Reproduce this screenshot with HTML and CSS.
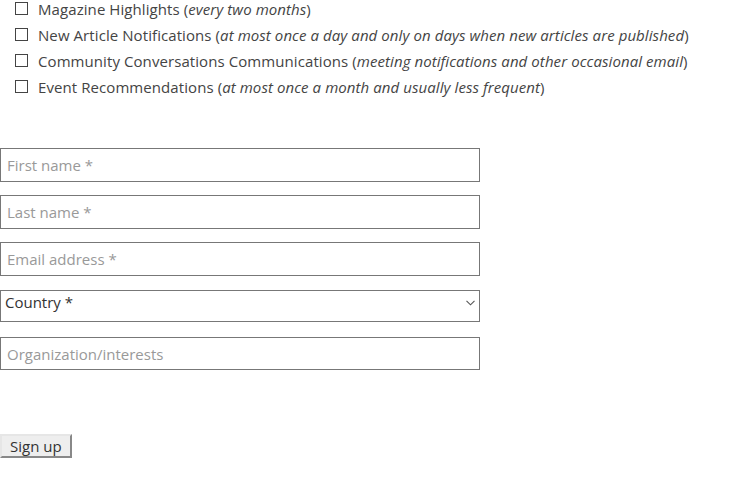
FILE: index.html
```html
<!DOCTYPE html>
<html>
<head>
<meta charset="utf-8">
<link rel="stylesheet" href="styles.css">
</head>
<body>
<form class="signup">
  <ul class="lists">
    <li class="opt"><input type="checkbox" class="cb"><span>Magazine Highlights (<em>every two months</em>)</span></li>
    <li class="opt"><input type="checkbox" class="cb"><span>New Article Notifications (<em>at most once a day and only on days when new articles are published</em>)</span></li>
    <li class="opt"><input type="checkbox" class="cb"><span>Community Conversations Communications (<em>meeting notifications and other occasional email</em>)</span></li>
    <li class="opt"><input type="checkbox" class="cb"><span>Event Recommendations (<em>at most once a month and usually less frequent</em>)</span></li>
  </ul>
  <div class="fields">
    <input class="field" type="text" placeholder="First name *">
    <input class="field" type="text" placeholder="Last name *">
    <input class="field" type="email" placeholder="Email address *">
    <div class="select-wrap">
      <select class="select"><option>Country *</option></select>
      <svg class="chev" width="9" height="6" viewBox="0 0 9 6"><path d="M0.5 0.8 L4.5 4.8 L8.5 0.8" fill="none" stroke="#555" stroke-width="1.1"/></svg>
    </div>
    <input class="field org" type="text" placeholder="Organization/interests">
  </div>
  <button class="submit" type="button">Sign up</button>
</form>
</body>
</html>
```

FILE: styles.css
```css
html, body {
  margin: 0;
  padding: 0;
  background: #fff;
}
body {
  font-family: "Open Sans", "Liberation Sans", sans-serif;
  font-size: 15px;
  color: #444;
}
.signup {
  display: flex;
  flex-direction: column;
  align-items: flex-start;
}
.lists {
  list-style: none;
  margin: 0;
  padding: 0 0 0 15px;
  letter-spacing: 0.08px;
}
.opt {
  display: flex;
  align-items: center;
  height: 26px;
  line-height: 20px;
}
.opt:first-child {
  margin-top: -4px;
}
.cb {
  appearance: none;
  -webkit-appearance: none;
  box-sizing: border-box;
  width: 13px;
  height: 13px;
  margin: 0 10px 0 0;
  border: 1px solid #444;
  background: #fff;
  flex: none;
  position: relative;
  top: -1px;
}
.opt em {
  font-style: italic;
}
.fields {
  display: flex;
  flex-direction: column;
  gap: 13px;
  margin-top: 48px;
}
.field, .select {
  box-sizing: border-box;
  width: 480px;
  height: 34px;
  margin: 0;
  border: 1px solid #777;
  background: #fff;
  font-family: "Open Sans", "Liberation Sans", sans-serif;
  font-size: 15px;
  color: #333;
  border-radius: 0;
  outline: none;
}
.field {
  padding: 0 6px;
}
.field::placeholder {
  color: #999;
}
.select-wrap {
  position: relative;
  margin-top: 1px;
}
.select {
  appearance: none;
  -webkit-appearance: none;
  height: 32px;
  padding: 0 4px 9px 4px;
  line-height: 20px;
  color: #333;
}
.chev {
  position: absolute;
  right: 5px;
  top: 10px;
  pointer-events: none;
}
.select-wrap + .field {
  margin-top: 2px;
}
.org {
  height: 33px;
}
.submit {
  margin-top: 64px;
  box-sizing: border-box;
  height: 24px;
  padding: 0 8px;
  font-family: "Open Sans", "Liberation Sans", sans-serif;
  font-size: 15px;
  line-height: 20px;
  color: #333;
  background: #eee;
  border: 2px solid;
  border-color: #e6e6e6 #888 #888 #e6e6e6;
  border-radius: 0;
}
```
